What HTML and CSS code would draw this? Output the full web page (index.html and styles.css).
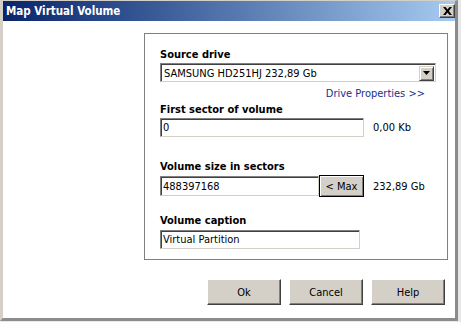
FILE: index.html
```html
<!DOCTYPE html>
<html lang="en">
<head>
  <meta charset="UTF-8" />
  <title>Map Virtual Volume</title>
  <link rel="stylesheet" href="styles.css">
</head>
<body>
  <div class="window">
    <div class="titlebar">
      <span class="title">Map Virtual Volume</span>
      <button class="close" type="button" aria-label="Close">
        <svg width="9" height="8" viewBox="0 0 9 8"><path d="M0 0h2.5L4.5 2.6 6.5 0H9L5.8 4 9 8H6.5L4.5 5.4 2.5 8H0l3.2-4z" fill="#000"/></svg>
      </button>
    </div>

    <div class="content">
      <div class="group">
        <div class="label">Source drive</div>
        <div class="combo">
          <span class="combo-text">SAMSUNG HD251HJ 232,89 Gb</span>
          <span class="combo-arrow">
            <svg width="7" height="4" viewBox="0 0 7 4"><path d="M0 0h7L3.5 4z" fill="#000"/></svg>
          </span>
        </div>
        <a class="link" href="#">Drive Properties &gt;&gt;</a>

        <div class="label label-first">First sector of volume</div>
        <div class="row">
          <input class="edit edit-first" type="text" value="0">
          <span class="note">0,00 Kb</span>
        </div>

        <div class="label label-size">Volume size in sectors</div>
        <div class="row">
          <input class="edit edit-size" type="text" value="488397168">
          <button class="max" type="button">&lt; Max</button>
          <span class="note">232,89 Gb</span>
        </div>

        <div class="label label-caption">Volume caption</div>
        <input class="edit edit-caption" type="text" value="Virtual Partition">
      </div>

      <div class="actions">
        <button class="btn" type="button">Ok</button>
        <button class="btn" type="button">Cancel</button>
        <button class="btn" type="button">Help</button>
      </div>
    </div>
  </div>
</body>
</html>
```

FILE: styles.css
```css
body {
  margin: 0;
  background: #e8e8e8;
  font-family: "DejaVu Sans Condensed", "DejaVu Sans", sans-serif;
  font-size: 11px;
  color: #000;
}

.window {
  width: 458px;
  height: 321px;
  box-sizing: border-box;
  background: #fff;
  border-top: 1px solid #d4d0c8;
  border-left: 3px solid #d4d0c8;
  border-right: 3px solid #8c8c8c;
  border-bottom: 3px solid #8c8c8c;
  display: flex;
  flex-direction: column;
}

.titlebar {
  height: 20px;
  display: flex;
  align-items: center;
  justify-content: space-between;
  padding: 0 0 0 3px;
  background: linear-gradient(to right, #0a246a, #2c4c8c 25%, #a6caf0);
}

.title {
  color: #fff;
  font-weight: bold;
  font-size: 11.5px;
}

.close {
  width: 16px;
  height: 14px;
  padding: 0;
  display: flex;
  align-items: center;
  justify-content: center;
  background: #d4d0c8;
  border: 1px solid;
  border-color: #fff #404040 #404040 #fff;
  box-shadow: inset -1px -1px #808080;
}

.content {
  flex: 1;
  padding: 12px 10px 0 141px;
}

.group {
  width: 304px;
  height: 227px;
  box-sizing: border-box;
  border: 1px solid #808080;
  padding: 14px 0 0 15px;
  display: flex;
  flex-direction: column;
  align-items: flex-start;
}

.label {
  font-weight: bold;
  line-height: 13px;
}

.label-first {
  margin-top: 3px;
}

.label-size {
  margin-top: 23px;
}

.label-caption {
  margin-top: 17px;
}

.combo {
  margin-top: 2px;
  width: 276px;
  height: 19px;
  box-sizing: border-box;
  display: flex;
  align-items: center;
  justify-content: space-between;
  border: 1px solid;
  border-color: #808080 #d4d0c8 #d4d0c8 #808080;
  box-shadow: inset 1px 1px #404040;
  padding: 1px 1px 0 3px;
}

.combo-arrow {
  width: 15px;
  height: 15px;
  box-sizing: border-box;
  display: flex;
  align-items: center;
  justify-content: center;
  background: #d4d0c8;
  border: 1px solid;
  border-color: #d4d0c8 #404040 #404040 #d4d0c8;
  box-shadow: inset 1px 1px #fff, inset -1px -1px #808080;
}

.link {
  align-self: flex-end;
  margin: 5px 22px 0 0;
  line-height: 13px;
  color: #1c2e8c;
  text-decoration: none;
}

.row {
  display: flex;
  align-items: center;
  margin-top: 2px;
}

.edit {
  height: 19px;
  box-sizing: border-box;
  margin: 0;
  padding: 0 2px;
  font: inherit;
  color: #000;
  background: #fff;
  border: 1px solid;
  border-color: #808080 #d4d0c8 #d4d0c8 #808080;
  box-shadow: inset 1px 1px #404040;
  outline: none;
}

.edit-first {
  width: 204px;
}

.edit-size {
  width: 159px;
  height: 20px;
}

.edit-caption {
  width: 200px;
  margin-top: 3px;
}

.max {
  width: 45px;
  height: 22px;
  margin: 0;
  padding: 0;
  font: inherit;
  color: #000;
  background: #d4d0c8;
  border: 1px solid #000;
  box-shadow: inset 1px 1px #fff, inset -1px -1px #808080;
}

.note {
  margin-left: 9px;
}

.actions {
  display: flex;
  justify-content: flex-end;
  gap: 8px;
  margin-top: 19px;
}

.btn {
  width: 74px;
  height: 26px;
  margin: 0;
  padding: 0;
  font: inherit;
  color: #000;
  background: #d4d0c8;
  border: 1px solid;
  border-color: #fff #404040 #404040 #fff;
  box-shadow: inset -1px -1px #808080;
}
```
